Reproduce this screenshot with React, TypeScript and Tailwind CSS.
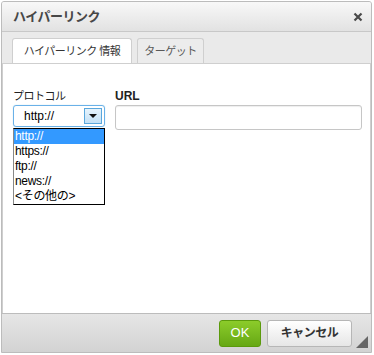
import React from "react";

const jp = { fontFamily: '"Liberation Sans", "Noto Sans CJK JP", sans-serif' };

export default function App() {
  const options = ["http://", "https://", "ftp://", "news://", "<その他の>"];
  return (
    <div className="w-[374px] h-[355px] bg-white pl-px pt-px" style={jp}>
      <div className="w-[371px] h-[352px] flex flex-col border border-[#bcbcbc] rounded-t-[3px] bg-[#eaeaea] overflow-hidden">
        {/* Title */}
        <div className="h-[30px] shrink-0 flex items-center justify-between px-[11px] bg-gradient-to-b from-[#f8f8f8] to-[#e2e2e2] border-b border-[#c8c8c8]">
          <span className="text-[13px] font-bold text-[#474747] tracking-[-0.5px]">ハイパーリンク</span>
          <svg width="10" height="10" viewBox="0 0 10 10" className="mr-[-3px]">
            <path d="M1.5 1.5l7 7M8.5 1.5l-7 7" stroke="#4a4a4a" strokeWidth="2.2" />
          </svg>
        </div>

        {/* Tabs */}
        <div className="h-[31px] shrink-0 flex items-end gap-[5px] pl-[10px] bg-[#eaeaea]">
          <div className="h-[26px] w-[120px] flex items-center justify-center bg-white border border-b-0 border-[#cfcfcf] rounded-t-[3px] text-[11px] tracking-[-0.5px] text-[#333] -mb-px">
            ハイパーリンク 情報
          </div>
          <div className="h-[25px] w-[67px] flex items-center justify-center bg-[#ececec] border border-b-0 border-[#cfcfcf] rounded-t-[3px] text-[11px] tracking-[-0.5px] text-[#595959]">
            ターゲット
          </div>
        </div>

        {/* Content */}
        <div className="flex-1 bg-white border-t border-x border-[#cfcfcf] px-[10px] pt-[25px]">
          <div className="flex gap-[10px]">
            <div className="w-[92px]">
              <div className="text-[11px] tracking-[-0.5px] text-[#222] leading-[14px] mb-[2px]">プロトコル</div>
              <div className="h-[22px] border border-[#6ab1e8] rounded-[3px] flex items-center justify-between pl-[10px] pr-[2px] shadow-[0_0_1px_#9cd]">
                <span className="text-[12px] text-black">http://</span>
                <div className="w-[18px] h-[16px] border border-[#5aa7dc] bg-gradient-to-b from-[#e6f3fc] to-[#c3e1f6] flex items-center justify-center">
                  <svg width="8" height="4" viewBox="0 0 8 4">
                    <path d="M0 0h8L4 4z" fill="#111" />
                  </svg>
                </div>
              </div>
              <div className="mt-[1px] w-[92px] border border-black border-l-[#888] bg-white">
                {options.map((o, i) => (
                  <div
                    key={o}
                    className={`h-[15px] leading-[15px] pl-[1px] text-[12px] tracking-[-0.3px] ${i === 0 ? "bg-[#3399ff] text-white" : "text-black"}`}
                  >
                    {o}
                  </div>
                ))}
              </div>
            </div>
            <div className="flex-1">
              <div className="text-[12px] font-bold text-[#222] leading-[14px] mb-[2px]">URL</div>
              <div className="h-[25px] w-[247px] border border-[#c6c6c6] rounded-[3px] bg-white shadow-[inset_0_1px_1px_#eee]" />
            </div>
          </div>
        </div>

        {/* Footer */}
        <div className="h-[39px] shrink-0 flex items-center justify-end gap-[6px] pr-[19px] border-t border-[#bcbcbc] bg-gradient-to-b from-[#e6e6e6] to-[#d3d3d3] relative">
          <button className="h-[27px] w-[42px] rounded-[3px] border border-[#5b9a0c] bg-gradient-to-b from-[#8ccc2a] to-[#66a814] text-white text-[13px]">
            OK
          </button>
          <button className="h-[27px] w-[85px] rounded-[3px] border border-[#b6b6b6] bg-gradient-to-b from-[#ffffff] to-[#e6e6e6] text-[#333] text-[12px] tracking-[-0.5px] font-bold">
            キャンセル
          </button>
          <svg width="12" height="12" viewBox="0 0 12 12" className="absolute right-[3px] bottom-[4px]">
            <path d="M12 0V12H0z" fill="#666" />
          </svg>
        </div>
      </div>
    </div>
  );
}
